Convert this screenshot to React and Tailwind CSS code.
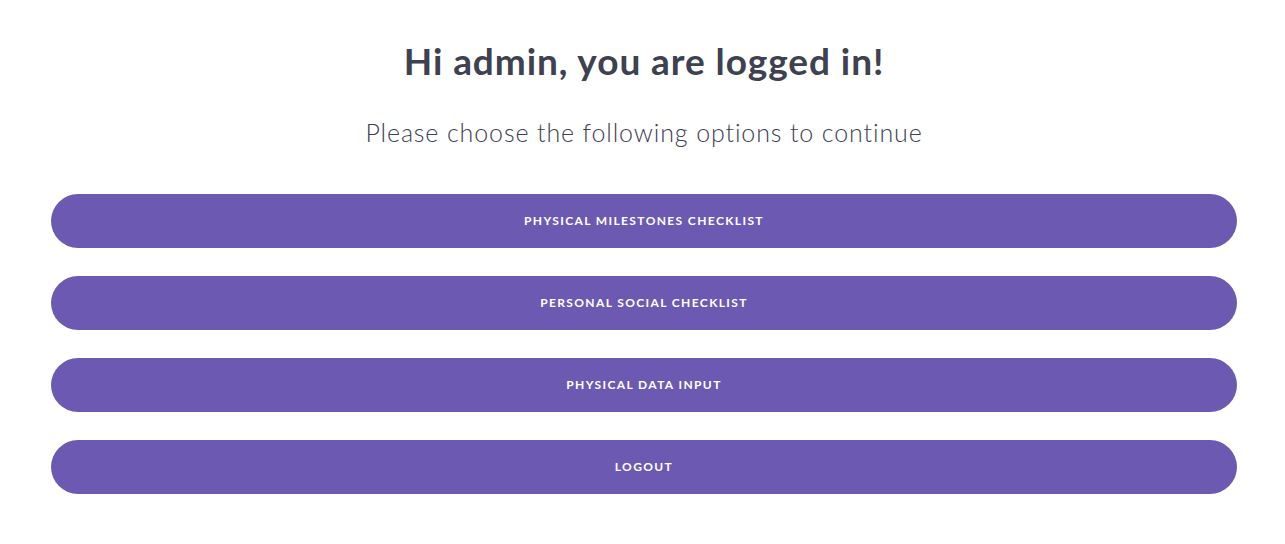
import React from 'react';

const options = [
  'Physical Milestones Checklist',
  'Personal Social Checklist',
  'Physical Data Input',
  'Logout',
];

const App = () => {
  return (
    <div className="min-h-screen bg-white font-['Lato',sans-serif] text-[#3d4150]">
      <div className="pl-[51px] pr-[48px] pt-[37px]">
        <h1 className="text-center text-[37px] font-bold leading-[48px] tracking-[0.025em]">
          Hi admin, you are logged in!
        </h1>
        <p className="mt-[31px] text-center text-[25px] font-light leading-[32px] tracking-[0.035em]">
          Please choose the following options to continue
        </p>
        <div className="mt-[46px] flex flex-col gap-[28px]">
          {options.map((label) => (
            <button
              key={label}
              className="h-[54px] w-full rounded-full bg-[#6c5ab2] text-[12px] font-bold uppercase tracking-[0.115em] text-white"
            >
              {label}
            </button>
          ))}
        </div>
      </div>
    </div>
  );
};

export default App;
